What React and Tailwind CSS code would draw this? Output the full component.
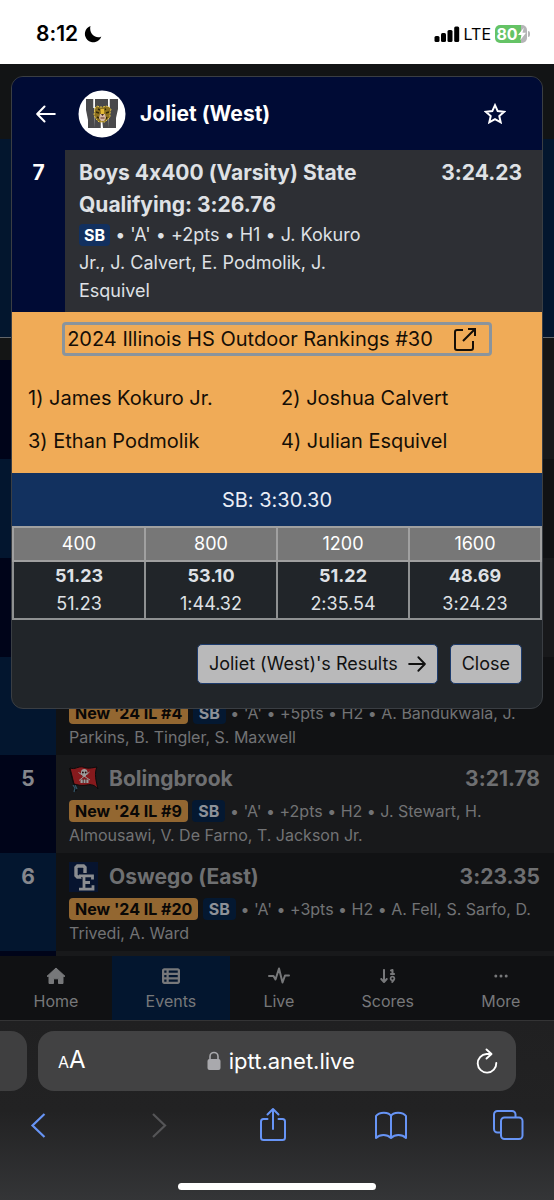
import { FaTableList, FaArrowDown19 } from "react-icons/fa6";

const rows = [
  {
    id: 4,
    time: "",
    badge: "New '24 IL #4",
    details: "'A' • +5pts • H2 • A. Bandukwala, J. Parkins, B. Tingler, S. Maxwell",
  },
  {
    id: 5,
    rank: "5",
    team: "Bolingbrook",
    logo: <FlagLogo />,
    time: "3:21.78",
    badge: "New '24 IL #9",
    details: "'A' • +2pts • H2 • J. Stewart, H. Almousawi, V. De Farno, T. Jackson Jr.",
  },
  {
    id: 6,
    rank: "6",
    team: "Oswego (East)",
    logo: <OswegoLogo />,
    time: "3:23.35",
    badge: "New '24 IL #20",
    details: "'A' • +3pts • H2 • A. Fell, S. Sarfo, D. Trivedi, A. Ward",
  },
];

const runners = ["James Kokuro Jr.", "Joshua Calvert", "Ethan Podmolik", "Julian Esquivel"];

const splits = [
  { distance: "400", lap: "51.23", total: "51.23" },
  { distance: "800", lap: "53.10", total: "1:44.32" },
  { distance: "1200", lap: "51.22", total: "2:35.54" },
  { distance: "1600", lap: "48.69", total: "3:24.23" },
];

const tabs = [
  { name: "Home", icon: <HomeIcon /> },
  { name: "Events", icon: <FaTableList className="size-[18px]" />, active: true },
  { name: "Live", icon: <PulseIcon /> },
  { name: "Scores", icon: <FaArrowDown19 className="size-[18px]" /> },
  { name: "More", icon: <DotsIcon /> },
];

function ArrowIcon({ className }) {
  return (
    <svg viewBox="0 0 20 20" className={className} fill="none" stroke="currentColor" strokeWidth="2" strokeLinecap="round" strokeLinejoin="round">
      <path d="M1.200 10h17.300M11.500 2.500L18.800 10l-7.300 7.500" />
    </svg>
  );
}

function HomeIcon() {
  return (
    <svg viewBox="0 0 20 18" className="h-[18px] w-5" fill="currentColor" stroke="currentColor" strokeWidth="1" strokeLinejoin="round">
      <path d="M10 1L1 9.300h2V16.500h4.500V11.800h5V16.500H17V9.300h2z" />
    </svg>
  );
}

function PulseIcon() {
  return (
    <svg viewBox="0 0 24 20" className="h-5 w-6" fill="none" stroke="currentColor" strokeWidth="2" strokeLinejoin="round" strokeLinecap="round">
      <path d="M2 10h4.500l2 3.500L12 2.500l3.500 14 2.500-7H22" />
    </svg>
  );
}

function DotsIcon() {
  return (
    <svg viewBox="0 0 16 16" className="size-4" fill="currentColor">
      <circle cx="2.800" cy="8" r="1.500" />
      <circle cx="8" cy="8" r="1.500" />
      <circle cx="13.200" cy="8" r="1.500" />
    </svg>
  );
}

function FlagLogo() {
  return (
    <svg viewBox="0 0 30 30" className="size-[30px]">
      <path d="M1 4l6 23" stroke="#0b0b0b" strokeWidth="2" />
      <path d="M4 21l2 3-1 4M6 21l2 4" stroke="#33586b" strokeWidth="1.200" fill="none" />
      <path d="M1 4c5 2 8-2 13-1 5 2 8 1 14 0-3 6-1 14 1 22-3-4-7-5-11-4-6 1-9 0-13-1z" fill="#861a1d" stroke="#0b0b0b" strokeWidth="1" />
      <path d="M9.500 8.500L21 16M20.500 8L10 16.500" stroke="#989898" strokeWidth="1" />
      <path d="M12 8c0-4 6.500-4 6.500 0v2.500H17v2h-3.500v-2H12z" fill="#9d9d9d" />
      <circle cx="13.900" cy="8.500" r="0.900" fill="#210507" />
      <circle cx="16.700" cy="8.500" r="0.900" fill="#210507" />
      <path d="M11.500 15.500h8v3.500h-8z" fill="#9d9d9d" />
      <path d="M14.200 15v4M16.900 15v4" stroke="#431315" strokeWidth="0.800" />
    </svg>
  );
}

function OswegoLogo() {
  return (
    <svg viewBox="0 0 30 30" className="size-[30px]" fill="none">
      <path fill="#07142f" d="M0 0h29v30H0z" />
      <path d="M8.500 4h6L16 5.500v8L14.500 15h-6L7 13.500v-8z" stroke="#8b8d91" strokeWidth="3.400" />
      <path d="M12 13.500h11v4.500M12 27.200h11v-5M15 14v13M15 20.500h5" stroke="#07142f" strokeWidth="5" />
      <path d="M10 13.800h13.500v3.700M10 27.200h14v-4M15 13.800v13.400M15 20.500h6" stroke="#8b8d91" strokeWidth="2.800" />
    </svg>
  );
}

function JolietLogo() {
  return (
    <svg viewBox="0 0 48 48" className="size-12">
      <circle cx="24" cy="24" r="23.500" fill="#fff" />
      <path d="M8 9h8l1 29h-7v-8L8 20zM17 9h13v29h-5l-1-7-1 7h-6zM31 9h9v10l-2 9v10h-8z" fill="#49494b" />
      <path d="M16 8v10M31 8v10M23.500 31v7" stroke="#fff" strokeWidth="1.500" />
      <path d="M17 18l2-2 3 1h3l3-1 3 1 2 2-1 4v4l-3 3-2 2h-6l-3-3-2-4z" fill="#8d711f" stroke="#e0c24c" strokeWidth="1" strokeDasharray="2 1" />
      <path d="M18 22l3 1M28 23l3-1M20 19l2 1M28 19l-2 1M19 27l2 1M29 27l-1 2" stroke="#302708" strokeWidth="1.400" />
      <path d="M22.500 19h4l-.5 5h-3z" fill="#e2b834" />
      <path d="M22 24h5l1 4-2 3h-3l-2-3z" fill="#d7b9a4" />
      <path d="M23 24h3l-1.500 2z" fill="#3a221b" />
      <path d="M22.500 28h4" stroke="#5b3023" strokeWidth="1.200" />
    </svg>
  );
}

function StatusBar() {
  return (
    <header className="flex h-16 items-center justify-between bg-white pr-6 pl-9 text-black">
      <div className="flex items-center gap-1.5 pt-1">
        <span className="text-[21px] leading-7 font-semibold">8:12</span>
        <svg viewBox="0 0 18 18" className="size-[18px]" fill="currentColor">
          <path d="M6.500 1A8.400 8.400 0 1 0 17.300 11.500C12 14.500 4.500 9 6.500 1z" />
        </svg>
      </div>
      <div className="flex items-center gap-1 pt-1">
        <svg viewBox="0 0 26 17" className="h-[17px] w-[26px]" fill="currentColor">
          <rect x="0.500" y="10" width="5" height="6" rx="1.500" />
          <rect x="7" y="7" width="5" height="9" rx="1.500" />
          <rect x="13.500" y="4" width="5" height="12" rx="1.500" />
          <rect x="20.200" y="0.500" width="5" height="15.500" rx="1.500" />
        </svg>
        <span className="text-base leading-6">LTE</span>
        <div className="flex items-center gap-px">
          <div className="flex h-[18px] w-8 items-center justify-center rounded-[5px] bg-linear-to-r from-[#65c366] from-80% to-[#b5b5b7] to-80% text-white">
            <span className="text-base leading-4 font-bold">80</span>
            <svg viewBox="0 0 9 14" className="h-3.5 w-2" fill="currentColor">
              <path d="M6.500 0L0 8h4l-1.500 6L9 5.500H5z" />
            </svg>
          </div>
          <span className="h-1.5 w-0.5 rounded-r-full bg-[#b5b5b7]" />
        </div>
      </div>
    </header>
  );
}

function ResultRow({ row, index }) {
  return (
    <li className={`flex ${index % 2 ? "bg-[#18191b]" : "bg-[#111214]"}`}>
      <div
        className={`w-14 shrink-0 pt-2 text-center text-[21px] leading-8 font-bold text-[#85878d] ${
          index % 2 ? "bg-[#000419]" : "bg-[#03162f]"
        }`}
      >
        {row.rank}
      </div>
      <div className="min-w-0 flex-1 pt-2 pr-3.5 pb-1.5 pl-[13px]">
        <div className="flex h-8 items-center text-[21px] leading-8 font-bold text-[#6e6f71]">
          {row.logo}
          <span className="ml-2.5">{row.team}</span>
          <span className="ml-auto">{row.time}</span>
        </div>
        <p className="mt-1 text-base leading-6 text-[#727375]">
          <span className="inline-block rounded-sm bg-[#936731] px-1.5 leading-[22px] font-bold text-[#090807]">
            {row.badge}
          </span>{" "}
          <span className="inline-block rounded-sm bg-[#041831] px-1.5 leading-[22px] font-bold text-[#8d9198]">
            SB
          </span>{" "}
          • {row.details}
        </p>
      </div>
    </li>
  );
}

function ResultDialog() {
  return (
    <section
      role="dialog"
      aria-labelledby="team"
      className="absolute inset-x-[11px] top-3 overflow-hidden rounded-xl border border-[#3a3e43] bg-[#212529] text-[#dfe1e5]"
    >
      <div className="flex h-[73px] items-center bg-[#000b35] pr-9 pl-6 text-white">
        <button type="button" aria-label="Back" className="mr-[22px]">
          <ArrowIcon className="size-5 rotate-180" />
        </button>
        <JolietLogo />
        <h2 id="team" className="ml-3.5 text-[21px] font-bold">
          Joliet (West)
        </h2>
        <button type="button" aria-label="Favorite" className="ml-auto">
          <svg viewBox="0 0 22 22" className="size-[22px]" fill="none" stroke="currentColor" strokeWidth="2">
            <path d="M11 2.200l2.700 5.900 6.400.7-4.800 4.300 1.400 6.300L11 16.200l-5.700 3.200 1.400-6.300L1.900 8.800l6.400-.7z" />
          </svg>
        </button>
      </div>

      <div className="flex bg-[#2d2f34]">
        <div className="w-[53px] shrink-0 bg-[#000b35] pt-[7px] text-center text-[21px] leading-8 font-bold text-white">7</div>
        <div className="flex flex-1 items-start justify-between py-[7px] pr-5 pl-3.5">
          <div className="w-[290px]">
            <h3 className="text-[21px] leading-8 font-bold">Boys 4x400 (Varsity) State Qualifying: 3:26.76</h3>
            <p className="text-lg leading-7">
              <span className="inline-block rounded-sm bg-[#12305f] px-[5px] text-base leading-[22px] font-bold text-white">
                SB
              </span>{" "}
              • 'A' • +2pts • H1 • J. Kokuro Jr., J. Calvert, E. Podmolik, J. Esquivel
            </p>
          </div>
          <span className="text-[21px] leading-8 font-bold">3:24.23</span>
        </div>
      </div>

      <div className="bg-[#f0ab57] px-4 py-2.5 text-xl text-[#150e06]">
        <div className="flex justify-center">
          <a
            href="#rankings"
            className="flex items-center gap-5 rounded-sm border-3 border-[#8a949d] pr-3 pl-0.5 leading-7 whitespace-nowrap"
          >
            2024 Illinois HS Outdoor Rankings #30
            <svg viewBox="0 0 24 24" className="size-6" fill="none" stroke="currentColor" strokeWidth="2">
              <path d="M10 3H4a2 2 0 0 0-2 2v16a2 2 0 0 0 2 2h14a2 2 0 0 0 2-2v-7M15 2h7v7M22 2L10 14" />
            </svg>
          </a>
        </div>
        <ol className="mt-[21px] grid grid-cols-2">
          {runners.map((name, i) => (
            <li key={name} className="py-1.5 leading-[31px] even:pl-1">
              {i + 1}) {name}
            </li>
          ))}
        </ol>
      </div>

      <p className="bg-[#12315f] pt-[11px] pb-2.5 text-center text-xl leading-8 text-[#e9edf5]">SB: 3:30.30</p>

      <table className="w-full table-fixed border-collapse border-2 border-[#8f9192] text-center text-lg">
        <thead>
          <tr className="bg-[#777777] text-white">
            {splits.map((split) => (
              <th key={split.distance} className="border-2 border-[#a0a0a0] py-1 leading-6 font-normal">
                {split.distance}
              </th>
            ))}
          </tr>
        </thead>
        <tbody>
          <tr>
            {splits.map((split) => (
              <td key={split.distance} className="border-2 border-[#8f9192] leading-7">
                <div className="font-bold">{split.lap}</div>
                <div>{split.total}</div>
              </td>
            ))}
          </tr>
        </tbody>
      </table>

      <div className="flex justify-end gap-3 px-5 py-6 text-lg leading-[38px] text-[#111111]">
        <button type="button" className="flex items-center gap-2.5 rounded-[5px] border border-[#1d3b6c] bg-[#b9b9ba] px-[11px]">
          Joliet (West)'s Results <ArrowIcon className="size-[18px]" />
        </button>
        <button type="button" className="rounded-[5px] border border-[#1d3b6c] bg-[#b9b9ba] px-[11px]">
          Close
        </button>
      </div>
    </section>
  );
}

function BrowserBar() {
  return (
    <footer className="border-t border-[#343435] bg-linear-to-b from-[#202021] via-[#222223] to-[#343537] pt-2.5">
      <div className="flex gap-[11px]">
        <div className="h-[60px] w-[27px] rounded-r-2xl bg-[#3f3f40]" />
        <div className="flex h-[60px] flex-1 items-center justify-between rounded-2xl bg-[#424243] pr-[18px] pl-5 text-white">
          <button type="button" aria-label="Page settings" className="leading-8">
            <span className="text-base">A</span>
            <span className="text-2xl">A</span>
          </button>
          <div className="flex items-center gap-2 text-[22px] leading-8">
            <svg viewBox="0 0 14 20" className="h-5 w-3.5" fill="#a9a9ad">
              <rect x="0.500" y="8" width="13" height="11" rx="2" />
              <path d="M3 9V5.500a4 4 0 0 1 8 0V9" fill="none" stroke="#a9a9ad" strokeWidth="1.600" />
            </svg>
            iptt.anet.live
          </div>
          <button type="button" aria-label="Reload">
            <svg viewBox="0 0 22 26" className="h-[26px] w-[22px]" fill="none" stroke="currentColor" strokeWidth="1.900" strokeLinecap="round" strokeLinejoin="round">
              <path d="M15 6H10.500A9.300 9.300 0 1 0 20.300 15M10.500 1.500l5 4.500-5 4.500" />
            </svg>
          </button>
        </div>
        <div className="w-[27px]" />
      </div>
      <nav className="flex h-[68px] items-center justify-between pr-[30px] pl-6 text-[#6794f5]">
        <button type="button" aria-label="Back" className="w-8">
          <svg viewBox="0 0 32 32" className="size-8" fill="none" stroke="currentColor" strokeWidth="2.200">
            <path d="M20.500 5L8.500 16.500 20.500 28" />
          </svg>
        </button>
        <button type="button" aria-label="Forward" className="w-8 text-[#555557]" disabled>
          <svg viewBox="0 0 32 32" className="size-8" fill="none" stroke="currentColor" strokeWidth="2.200">
            <path d="M12 5l12 11.500L12 28" />
          </svg>
        </button>
        <button type="button" aria-label="Share">
          <svg viewBox="0 0 32 36" className="h-9 w-8" fill="none" stroke="currentColor" strokeWidth="2" strokeLinecap="round" strokeLinejoin="round">
            <path d="M10.500 12H6.500a2.500 2.500 0 0 0-2.500 2.500v16A2.500 2.500 0 0 0 6.500 33h19a2.500 2.500 0 0 0 2.500-2.500v-16a2.500 2.500 0 0 0-2.500-2.500h-4M16 22V2M10.500 7.500L16 2l5.500 5.500" />
          </svg>
        </button>
        <button type="button" aria-label="Bookmarks">
          <svg viewBox="0 0 34 32" className="h-8 w-[34px]" fill="none" stroke="currentColor" strokeWidth="2" strokeLinejoin="round">
            <path d="M17 7c-2-4.500-12-4.500-15 0v22c4-4 11-4 15 0V7zM17 7c2-4.500 12-4.500 15 0v22c-4-4-11-4-15 0" />
          </svg>
        </button>
        <button type="button" aria-label="Tabs">
          <svg viewBox="0 0 32 32" className="size-8" fill="none" stroke="currentColor" strokeWidth="2">
            <rect x="9" y="8.500" width="21.500" height="21.500" rx="3.500" />
            <path d="M9 23.500H5.500A3.500 3.500 0 0 1 2 20V5.500A3.500 3.500 0 0 1 5.500 2H20a3.500 3.500 0 0 1 3.500 3.500v3" />
          </svg>
        </button>
      </nav>
      <div className="pt-6 pb-2.5">
        <div className="mx-auto h-[7px] w-[198px] rounded-full bg-white" />
      </div>
    </footer>
  );
}

export default function App() {
  return (
    <div className="flex min-h-screen flex-col bg-[#111214] font-['Inter','Liberation_Sans',sans-serif] [font-feature-settings:'calt'_0]">
      <StatusBar />
      <main className="relative flex-1 overflow-hidden">
        <div className="h-[75px] bg-[#121415]" />
        <div className="h-[199px] border-b border-[#62666b] bg-[#03162e]" />
        <div className="h-[22px] bg-[#141515]" />
        {/* first three places sit behind the dialog */}
        {[1, 2, 3].map((place) => (
          <div key={place} className={`flex h-[99px] ${place % 2 ? "bg-[#18191b]" : "bg-[#111214]"}`}>
            <div className={`w-14 ${place % 2 ? "bg-[#000419]" : "bg-[#03162f]"}`} />
          </div>
        ))}
        <ul>
          {rows.map((row, i) => (
            <ResultRow key={row.id} row={row} index={i} />
          ))}
        </ul>
        <div className="flex h-[5px] bg-[#18191b]">
          <div className="w-14 bg-[#000419]" />
        </div>
        <ResultDialog />
      </main>
      <nav className="flex h-16 bg-[#101113] text-[#77787a]">
        {tabs.map((tab) => (
          <a
            key={tab.name}
            href={`#${tab.name.toLowerCase()}`}
            className={`flex flex-auto flex-col items-center pt-2.5 text-base leading-6 ${tab.active ? "bg-[#03162f]" : ""}`}
          >
            <span className="mb-[3px] flex h-5 items-center">{tab.icon}</span>
            {tab.name}
          </a>
        ))}
      </nav>
      <BrowserBar />
    </div>
  );
}
